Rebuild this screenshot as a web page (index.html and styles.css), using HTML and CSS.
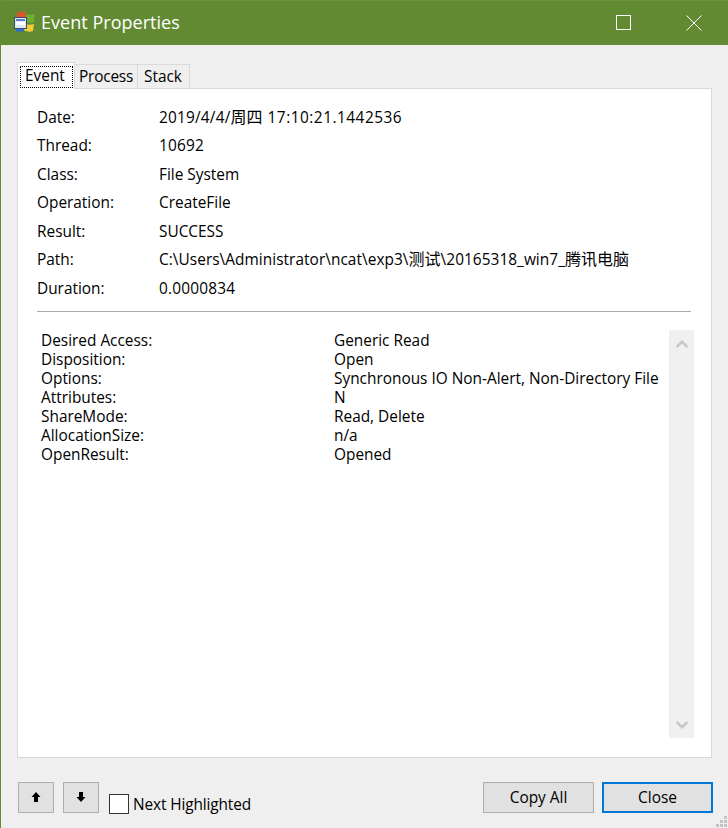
FILE: index.html
```html
<!DOCTYPE html>
<html lang="zh">
<head>
<meta charset="utf-8">
<title>Event Properties</title>
<link rel="stylesheet" href="styles.css">
</head>
<body>
<div class="window">
  <header class="titlebar">
    <svg class="app-icon" width="24" height="24" viewBox="0 0 24 24">
      <path d="M5 3 Q9 0.5 14 2.5 L14 10 L5 10Z" fill="#d9572a"/>
      <path d="M14 4 Q18 6 23 3.5 L22 12 Q18 13.5 14 12Z" fill="#6fae2f"/>
      <path d="M13 14 Q17 15.5 22 14 L21 21 Q17 22.5 12 20.5Z" fill="#f2cd36"/>
      <path d="M4 18 L12 18 L12 22 Q8 20.5 4 22Z" fill="#2f6fc4"/>
      <rect x="2.5" y="7.5" width="12" height="11" fill="#dfe6f2" stroke="#3c4c70"/>
      <rect x="4" y="9" width="9" height="2" fill="#5b82c0"/>
      <rect x="4" y="12" width="9" height="3" fill="#ffffff"/>
    </svg>
    <span class="title">Event Properties</span>
    <div class="caption">
      <span class="cap-btn"></span>
      <span class="cap-btn cap-max"><svg width="16" height="16" viewBox="0 0 16 16"><rect x=".5" y=".5" width="14" height="14" fill="none" stroke="#fff" stroke-width="1"/></svg></span>
      <span class="cap-btn cap-close"><svg width="16" height="16" viewBox="0 0 16 16"><path d="M.5 .5 L15.5 15.5 M15.5 .5 L.5 15.5" stroke="#fff" stroke-width="1" fill="none"/></svg></span>
    </div>
  </header>
  <main class="client">
    <nav class="tabs">
      <div class="tab tab-active"><span class="tab-focus">Event</span></div>
      <div class="tab tab-process">Process</div>
      <div class="tab tab-stack">Stack</div>
    </nav>
    <section class="panel">
      <dl class="summary">
        <dt>Date:</dt><dd><span class="num">2019/4/4/</span><span class="cjk">周四</span> <span class="time">17:10:21.1442536</span></dd>
        <dt>Thread:</dt><dd class="num">10692</dd>
        <dt>Class:</dt><dd>File System</dd>
        <dt>Operation:</dt><dd>CreateFile</dd>
        <dt>Result:</dt><dd>SUCCESS</dd>
        <dt>Path:</dt><dd class="path">C:\Users\Administrator\ncat\exp3\<span class="cjk">测试</span>\20165318_win7_<span class="cjk">腾讯电脑</span></dd>
        <dt>Duration:</dt><dd class="num">0.0000834</dd>
      </dl>
      <hr class="rule">
      <div class="detail-wrap">
        <dl class="detail">
          <dt>Desired Access:</dt><dd>Generic Read</dd>
          <dt>Disposition:</dt><dd>Open</dd>
          <dt>Options:</dt><dd>Synchronous IO Non-Alert, Non-Directory File</dd>
          <dt>Attributes:</dt><dd>N</dd>
          <dt>ShareMode:</dt><dd>Read, Delete</dd>
          <dt>AllocationSize:</dt><dd>n/a</dd>
          <dt>OpenResult:</dt><dd>Opened</dd>
        </dl>
        <div class="scrollbar">
          <svg width="12" height="8" viewBox="0 0 12 8"><path d="M.7 7 L6 1.8 L11.3 7" fill="none" stroke="#c8c8c8" stroke-width="2.6"/></svg>
          <svg width="12" height="8" viewBox="0 0 12 8"><path d="M.7 1 L6 6.2 L11.3 1" fill="none" stroke="#c8c8c8" stroke-width="2.6"/></svg>
        </div>
      </div>
    </section>
    <footer class="actions">
      <button class="btn btn-small"><svg width="12" height="12" viewBox="0 0 12 12"><path d="M6 1 L10.5 6 L8 6 L8 11 L4 11 L4 6 L1.5 6Z" fill="#000"/></svg></button>
      <button class="btn btn-small"><svg width="12" height="12" viewBox="0 0 12 12"><path d="M6 11 L10.5 6 L8 6 L8 1 L4 1 L4 6 L1.5 6Z" fill="#000"/></svg></button>
      <label class="check"><span class="box"></span>Next Highlighted</label>
      <button class="btn btn-wide btn-copy">Copy All</button>
      <button class="btn btn-wide btn-default">Close</button>
    </footer>
    <svg class="grip" width="12" height="12" viewBox="0 0 12 12"><path d="M8 0h3v3H8zM4 4h3v3H4zM8 4h3v3H8zM0 8h3v3H0zM4 8h3v3H4zM8 8h3v3H8z" fill="#c4c4c4"/></svg>
  </main>
</div>
</body>
</html>
```
FILE: styles.css
```css
* { box-sizing: border-box; }
html, body { margin: 0; height: 100%; }
body {
  font-family: "Open Sans", "Noto Sans CJK SC", sans-serif;
  font-size: 15.4px;
  color: #000;
  background: #f0f0f0;
}
.window {
  width: 728px;
  height: 828px;
  display: flex;
  flex-direction: column;
  border-left: 1px solid #628a33;
  position: relative;
}
.titlebar {
  height: 45px;
  background: #628a33;
  color: #fff;
  display: flex;
  align-items: center;
  padding-left: 11px;
  padding-bottom: 2px;
  border-top: 1px solid #6b9140;
}
.app-icon { flex: none; margin-right: 5px; }
.title { font-size: 18px; letter-spacing: .03px; }
.caption { margin-left: auto; display: flex; margin-bottom: -2px; }
.cap-btn {
  width: 71px;
  height: 44px;
  display: flex;
  align-items: center;
  justify-content: center;
}
.cap-max { width: 72px; }
.cap-close { width: 68px; }
.client {
  flex: 1;
  position: relative;
  background: #efefef;
  padding: 17px 15px 0 16px;
  display: flex;
  flex-direction: column;
}
.tabs { display: flex; align-items: flex-end; height: 27px; position: relative; z-index: 1; margin-bottom: -1px; }
.tab {
  height: 25px;
  padding: 0 0 0 4px;
  border: 1px solid #d9d9d9;
  border-left: 0;
  background: #efefef;
  line-height: 24px;
}
.tab-process { width: 63px; letter-spacing: -.2px; }
.tab-stack { width: 52px; padding-left: 6px; }
.tab-active {
  height: 27px;
  background: #fff;
  border: 1px solid #d9d9d9;
  border-bottom: 0;
  padding: 3px 1px 0 2px;
  width: 58px;
}
.tab-focus {
  display: block;
  border: 1px dotted #000;
  height: 22px;
  line-height: 18px;
  padding-left: 4px;
}
.panel {
  height: 670px;
  width: 695px;
  background: #fff;
  border: 1px solid #d9d9d9;
  padding: 17.7px 20px 0 19px;
  display: flex;
  flex-direction: column;
}
.summary {
  display: grid;
  grid-template-columns: 122px 1fr;
  grid-auto-rows: 28.5px;
  align-items: baseline;
  line-height: 21px;
  margin: 0;
}
.summary dt, .summary dd, .detail dt, .detail dd { margin: 0; white-space: nowrap; }
.num { letter-spacing: .2px; }
.path { letter-spacing: .05px; }
.cjk { font-size: 16px; line-height: 0; }
.time { letter-spacing: .5px; margin-left: 1px; }
.rule { width: 654px; height: 1px; border: 0; background: #a9a9a9; margin: 4.8px 0 18px; flex: none; }
.detail-wrap { display: flex; height: 408px; }
.detail {
  width: 632px;
  margin: 0 0 0 4px;
  padding-top: 1px;
  display: grid;
  grid-template-columns: 293px 1fr;
  grid-auto-rows: 19px;
  align-content: start;
  line-height: 19px;
}
.scrollbar {
  width: 25px;
  height: 408px;
  background: #f0f0f0;
  margin-right: -3px;
  display: flex;
  flex-direction: column;
  justify-content: space-between;
  align-items: center;
  padding: 10px 0 9px;
}
.actions {
  display: flex;
  align-items: flex-start;
  margin: 24px 0 0 1px;
}
.btn {
  font: inherit;
  height: 31px;
  background: #e1e1e1;
  border: 1px solid #adadad;
  padding: 0 0 1px;
  display: flex;
  align-items: center;
  justify-content: center;
}
.btn-small { width: 36px; margin-right: 9px; }
.check { display: flex; align-items: center; margin: 11px 0 0 1px; height: 22px; line-height: 19px; letter-spacing: -.12px; }
.box { width: 20px; height: 20px; border: 1px solid #333; background: #fff; margin-right: 4px; }
.btn-wide { width: 111px; }
.btn-copy { margin-left: auto; }
.btn-default { margin-left: 8px; border: 2px solid #0078d7; }
.grip { position: absolute; right: 0; bottom: 0; }
```
